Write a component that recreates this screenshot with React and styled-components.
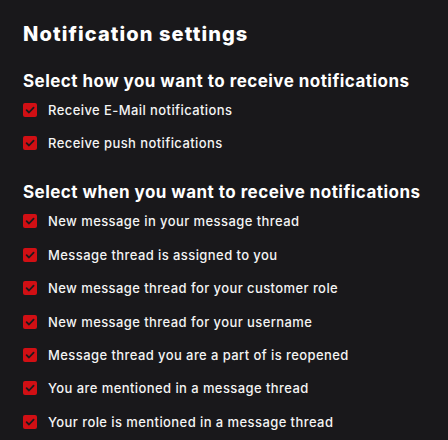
import React from "react";
import styled, { createGlobalStyle } from "styled-components";

const Global = createGlobalStyle`
  html, body { margin: 0; padding: 0; background: #19181b; }
  body { font-family: Inter, "Noto Sans", sans-serif; color: #fff; }
`;

const Page = styled.div`
  padding: 20px 23px 0;
  height: 440px;
  box-sizing: border-box;
  background: #19181b;
  overflow: hidden;
`;

const Title = styled.h1`
  margin: 0;
  font-size: 20px;
  line-height: 28px;
  font-weight: 800;
  letter-spacing: 1.1px;
  color: #fff;
`;

const Section = styled.section`
  margin-top: ${(p) => p.$top}px;
  display: flex;
  flex-direction: column;
`;

const Heading = styled.h2`
  margin: 0 0 ${(p) => p.$after}px;
  font-size: 17px;
  line-height: 24px;
  font-weight: 700;
  letter-spacing: 0.46px;
  color: #fff;
`;

const List = styled.div`
  display: flex;
  flex-direction: column;
`;

const Row = styled.label`
  display: flex;
  align-items: center;
  gap: 11px;
  height: 33.4px;
  font-size: 13px;
  font-weight: 500;
  letter-spacing: 0.42px;
  color: #f4f4f4;
`;

const Box = styled.span`
  width: 14px;
  height: 14px;
  border-radius: 2px;
  background: #d10f14;
  display: flex;
  align-items: center;
  justify-content: center;
  flex-shrink: 0;
`;

const Check = () => (
  <Box>
    <svg width="10" height="10" viewBox="0 0 10 10">
      <path d="M1.6 5.2 L4 7.5 L8.6 2.6" fill="none" stroke="#1b1a1d" strokeWidth="1.8" strokeLinecap="round" strokeLinejoin="round" />
    </svg>
  </Box>
);

const how = ["Receive E-Mail notifications", "Receive push notifications"];
const when = [
  "New message in your message thread",
  "Message thread is assigned to you",
  "New message thread for your customer role",
  "New message thread for your username",
  "Message thread you are a part of is reopened",
  "You are mentioned in a message thread",
  "Your role is mentioned in a message thread",
];

export default function App() {
  return (
    <Page>
      <Global />
      <Title>Notification settings</Title>
      <Section $top={21}>
        <Heading $after={0}>Select how you want to receive notifications</Heading>
        <List>
          {how.map((t) => (
            <Row key={t}><Check />{t}</Row>
          ))}
        </List>
      </Section>
      <Section $top={20}>
        <Heading $after={1}>Select when you want to receive notifications</Heading>
        <List>
          {when.map((t) => (
            <Row key={t}><Check />{t}</Row>
          ))}
        </List>
      </Section>
    </Page>
  );
}
